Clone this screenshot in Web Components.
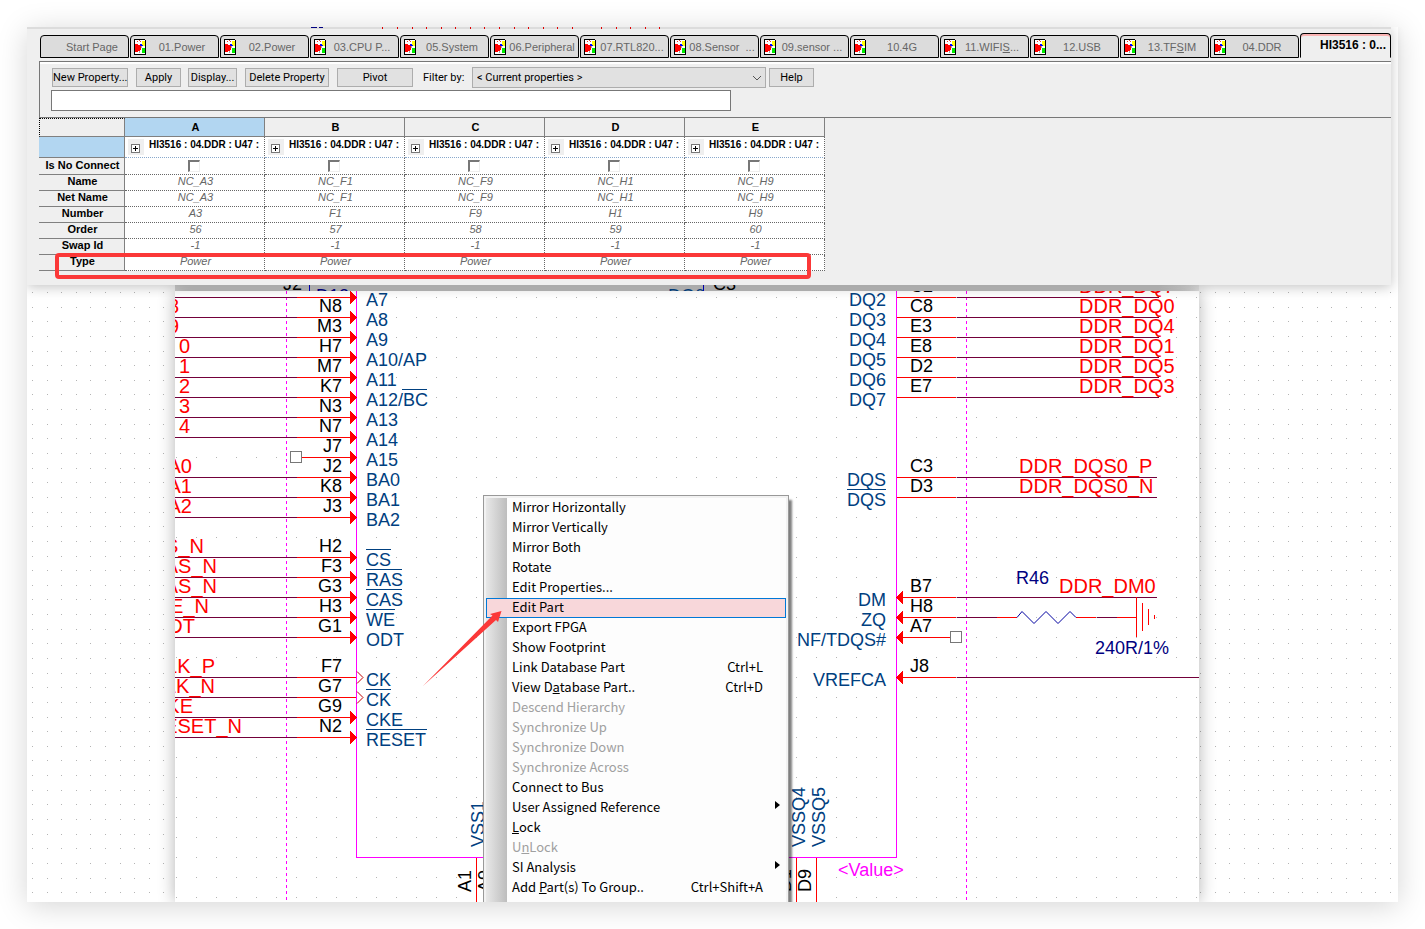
<!DOCTYPE html>
<html lang="en">
<head>
<meta charset="utf-8">
<title>HI3516 : 04.DDR</title>
<style>
  html, body { margin: 0; background: #fff; }
  body { font-family: "Liberation Sans", Arial, sans-serif; font-size: 11px; color: #000; }
</style>
</head>
<body>
<app-frame>
  <property-editor slot="editor">
    <tab-strip slot="tabs">
      <sheet-tab plain>Start Page</sheet-tab>
      <sheet-tab>01.Power</sheet-tab>
      <sheet-tab>02.Power</sheet-tab>
      <sheet-tab>03.CPU P...</sheet-tab>
      <sheet-tab>05.System</sheet-tab>
      <sheet-tab>06.Peripheral</sheet-tab>
      <sheet-tab>07.RTL820...</sheet-tab>
      <sheet-tab>08.Sensor &nbsp;...</sheet-tab>
      <sheet-tab>09.sensor ...</sheet-tab>
      <sheet-tab>10.4G</sheet-tab>
      <sheet-tab>11.WIFI<u>S</u>...</sheet-tab>
      <sheet-tab>12.USB</sheet-tab>
      <sheet-tab>13.TF<u>S</u>IM</sheet-tab>
      <sheet-tab>04.DDR</sheet-tab>
      <sheet-tab plain active>HI3516 : 0...</sheet-tab>
    </tab-strip>
    <property-toolbar slot="toolbar"></property-toolbar>
    <property-grid slot="grid"></property-grid>
  </property-editor>
  <schematic-canvas slot="canvas">
    <context-menu slot="menu">
      <menu-item>Mirror Horizontally</menu-item>
      <menu-item>Mirror Vertically</menu-item>
      <menu-item>Mirror Both</menu-item>
      <menu-item>Rotate</menu-item>
      <menu-item>Edit Properties...</menu-item>
      <menu-item selected>Edit Part</menu-item>
      <menu-item>Export FPGA</menu-item>
      <menu-item>Show Footprint</menu-item>
      <menu-item keys="Ctrl+L">Link Database Part</menu-item>
      <menu-item keys="Ctrl+D">View D<u>a</u>tabase Part..</menu-item>
      <menu-item disabled>Descend Hierarchy</menu-item>
      <menu-item disabled>Synchronize Up</menu-item>
      <menu-item disabled>Synchronize Down</menu-item>
      <menu-item disabled>Synchronize Across</menu-item>
      <menu-item>Connect to Bus</menu-item>
      <menu-item submenu>User Assigned Reference</menu-item>
      <menu-item><u>L</u>ock</menu-item>
      <menu-item disabled>U<u>n</u>Lock</menu-item>
      <menu-item submenu>SI Analysis</menu-item>
      <menu-item keys="Ctrl+Shift+A">Add <u>P</u>art(s) To Group..</menu-item>
    </context-menu>
  </schematic-canvas>
</app-frame>

<script>
const define = (name, render) => customElements.define(name, class extends HTMLElement {
  connectedCallback() {
    if (this.shadowRoot) return;
    this.attachShadow({ mode: 'open' }).innerHTML = render(this);
  }
});

define('app-frame', () => `
  <style>
    :host { display: block; padding: 27px; }
    main { background: #fff; box-shadow: 0 4px 28px rgba(0,0,0,.17); }
    ::slotted(*) { position: relative; }
    ::slotted([slot=editor]) { z-index: 1; }
  </style>
  <main><slot name="editor"></slot><slot name="canvas"></slot></main>`);

define('property-editor', () => {
  const ticks = [382,397,412,426,441,455,470,484,499,514,528,543,557,572,601,616,630,645,659];
  return `
  <style>
    :host { display: block; margin-right: 7px; background: #efefef;
            box-shadow: 0 2px 12px rgba(0,0,0,.24); padding-bottom: 14px; clip-path: inset(0 -20px -20px 0); }
    .edge { display: block; width: 100%; height: 2px; background: #dcdcdc; }
    .body { margin-left: 12px; }
    .mark { position: absolute; left: 28px; right: 580px; bottom: 6px; height: 18px;
            border: 4px solid #fb3838; border-radius: 4px; }
  </style>
  <svg class="edge" shape-rendering="crispEdges">
    <path d="M284 0h6v1h-6zM292 0h4v1h-4z" fill="#000080"/>
    ${ticks.map(x => `<rect x="${x - 27}" width="1" height="2" fill="#e00000"/>`).join('')}
  </svg>
  <slot name="tabs"></slot>
  <div class="body"><slot name="toolbar"></slot><slot name="grid"></slot></div>
  <div class="mark"></div>`;
});

define('tab-strip', () => `
  <style>
    :host { display: flex; align-items: flex-end; gap: 1px; padding: 4px 0 3px 13px; height: 25px; }
  </style><slot></slot>`);

define('sheet-tab', el => `
  <style>
    :host { display: block; flex: 0 0 89px; }
    :host([active]) { flex: 1 0 89px; }
    button { display: flex; align-items: center; width: 100%; height: 23px; padding: 0 0 0 3px; margin: 0;
      font: 11px "Liberation Sans", Arial, sans-serif; color: #666; background: #dcdcdc; white-space: nowrap;
      border: 1px solid #000; border-radius: 4px 4px 0 0; }
    :host([active]) button { height: 25px; padding-bottom: 2px; font-weight: bold; font-size: 12px; color: #000; background: #efefef;
      border-bottom-color: transparent; box-shadow: inset 0 2px #fbb4b4; }
    svg { flex: none; width: 12px; height: 16px; }
    span { flex: 1; text-align: center; }
  </style>
  <button type="button">
    <svg viewBox="0 0 12 16" shape-rendering="crispEdges">${el.hasAttribute('plain') ? '' : `
      <path d="M0 0h11v15H0z" fill="#fff"/>
      <path d="M0 0h11v1H0zM0 0h1v16H0zM11 1h1v15h-1zM0 15h12v1H0z"/>
      <path d="M1 5h3v1h2v1h1v4H6v1H4v1H1z" fill="#f00"/>
      <path d="M3 2h1v1H3zM5 1h1v1H5zM6 2h1v1H6z" fill="#e33"/>
      <path d="M8 2h3v5H8z" fill="#ff0"/><path d="M6 5h2v1h1v1H6z" fill="#00f"/>
      <path d="M8 9h3v5H8z" fill="#0e0"/><path d="M5 12h1v2H5zM7 7h1v2H7z" fill="#aaa"/>`}
    </svg><span><slot></slot></span>
  </button>`);

define('property-toolbar', () => `
  <style>
    :host { display: block; height: 55px; border: 1px solid #777; border-width: 1px 0 1px 1px;
            box-shadow: inset 0 2px #fff; font: 12px Roboto, "Liberation Sans", sans-serif; }
    .row { display: flex; align-items: center; padding: 5px 0 0 12px; height: 21px; }
    button { height: 19px; padding: 0; border: 1px solid #adadad; background: #e1e1e1; white-space: nowrap;
             font: 11px Roboto, "Liberation Sans", sans-serif; color: #000; margin-right: 8px; }
    label { font-size: 11px; width: 49px; margin-left: 2px; }
    .box { position: relative; display: flex; }
    select { appearance: none; width: 294px; height: 21px; padding: 0 4px; border: 1px solid #adadad; border-radius: 0;
             background: #e1e1e1; font: 11px Roboto, "Liberation Sans", sans-serif; color: #000; margin-right: 3px; }
    .box svg { position: absolute; right: 7px; top: 8px; width: 10px; height: 6px; pointer-events: none; }
    input { display: block; box-sizing: border-box; width: 680px; height: 21px; margin: 2px 0 0 11px;
            border: 1px solid #777; background: #fff; padding: 0 4px; }
    .w1 { width: 76px; } .w2 { width: 45px; margin-right: 7px; } .w3 { width: 49px; } .w4 { width: 84px; }
  </style>
  <div class="row">
    <button class="w1">New Property...</button><button class="w2">Apply</button>
    <button class="w3">Display...</button><button class="w4">Delete Property</button>
    <button class="w1">Pivot</button>
    <label for="filter">Filter by:</label>
    <span class="box"><select id="filter"><option>&lt; Current properties &gt;</option></select>
      <svg viewBox="0 0 10 6"><path d="M1 1l4 4 4-4" fill="none" stroke="#555"/></svg></span>
    <button class="w2">Help</button>
  </div>
  <input type="text" aria-label="Property value">`);

define('property-grid', () => {
  const pins = [['A3', 56], ['F1', 57], ['F9', 58], ['H1', 59], ['H9', 60]];
  const rows = [
    ['Is No Connect', p => `<input type="checkbox" aria-label="Is No Connect ${p[0]}">`],
    ['Name', p => 'NC_' + p[0]], ['Net Name', p => 'NC_' + p[0]], ['Number', p => p[0]],
    ['Order', p => p[1]], ['Swap Id', () => '-1'], ['Type', () => 'Power']];
  return `
  <style>
    :host { display: block; }
    table { table-layout: fixed; width: 786px; border-spacing: 0; font-size: 11px; line-height: 13px; }
    th, td { box-sizing: border-box; height: 16px; padding: 0 0 2px 2px; text-align: center; white-space: nowrap; overflow: hidden; }
    th { background: #efefef; border: 1px solid #808080; border-width: 0 1px 1px 0; }
    td { background: #fff; color: #666; font-style: italic; border: 1px dotted #666; border-width: 0 1px 1px 0; }
    thead th { height: 19px; padding: 0 0 0 2px; }
    thead th:first-child { border-top: 1px dotted #000; border-left: 1px dotted #000; }
    .on { background: #b2d6f1; }
    .part th, .part td { height: 21px; padding-left: 0; }
    .part td { color: #000; font-size: 10px; font-style: normal; font-weight: bold; border-bottom-color: #89a8cc; }
    .part div { display: flex; align-items: flex-start; gap: 5px; padding-left: 3px; height: 18px; }
    .part span { padding-top: 1px; }
    .part button { flex: none; display: flex; width: 16px; height: 16px; margin-top: 2px; padding: 5px 0 0 3px; border: 0; background: #efefef; }
    input { appearance: none; display: block; width: 12px; height: 12px; margin: 2px 0 0 61px;
            border: 1px solid #eee; border-top: 2px solid #777; border-left: 2px solid #777; box-sizing: border-box; }
    .c0 { width: 86px; } .c { width: 140px; }
  </style>
  <table>
    <colgroup><col class="c0">${pins.map(() => '<col class="c">').join('')}</colgroup>
    <thead><tr><th></th>${[...'ABCDE'].map((c, i) => `<th scope="col"${i ? '' : ' class="on"'}>${c}</th>`).join('')}</tr></thead>
    <tbody>
      <tr class="part"><th class="on"></th>${pins.map(() => `<td><div><button aria-label="Expand">
        <svg width="9" height="9" shape-rendering="crispEdges"><path d="M.5.5h8v8h-8z" fill="#fff" stroke="#777"/><path d="M2 4.5h5M4.500 2v5" stroke="#000"/></svg>
        </button><span>HI3516 : 04.DDR : U47 :</span></div></td>`).join('')}</tr>
      ${rows.map(([name, cell]) => `<tr><th scope="row">${name}</th>${pins.map(p => `<td>${cell(p)}</td>`).join('')}</tr>`).join('')}
    </tbody>
  </table>`;
});

const RED = '#ff0000', WIRE = '#73003a', NAVY = '#004080', PINK = '#ff00ff';
const line = (x1, y1, x2, y2, c, extra = '') =>
  `<path d="M${x1} ${y1}L${x2} ${y2}" stroke="${c}" fill="none" ${extra}/>`;
const text = (x, y, s, cls) => `<text x="${x}" y="${y}" class="${cls}">${s}</text>`;
const vtext = (x, y, s, cls) => `<text transform="translate(${x} ${y}) rotate(-90)" class="${cls}">${s}</text>`;

/* Left pins: row, label, pin number, net tail, net right edge, overline [x1, x2], kind */
const LEFT = [
  [297, 'A7', ''], [317, 'A8', 'N8', '8', 179], [337, 'A9', 'M3', '9', 179], [357, 'A10/AP', 'H7', '0', 190],
  [377, 'A11', 'M7', '1', 190], [397, 'A12/BC', 'K7', '2', 190, [402, 427]], [417, 'A13', 'N3', '3', 190],
  [437, 'A14', 'N7', '4', 190], [457, 'A15', 'J7', '', 0, null, 'nc'], [477, 'BA0', 'J2', 'A0', 192],
  [497, 'BA1', 'K8', 'A1', 192], [517, 'BA2', 'J3', 'A2', 192], [557, 'CS', 'H2', 'S_N', 204, [366, 391]],
  [577, 'RAS', 'F3', 'AS_N', 217, [366, 402]], [597, 'CAS', 'G3', 'AS_N', 217, [366, 402]],
  [617, 'WE', 'H3', 'E_N', 209, [366, 395]], [637, 'ODT', 'G1', 'DT', 195],
  [677, 'CK', 'F7', 'LK_P', 215, null, 'clk'], [697, 'CK', 'G7', 'LK_N', 215, [366, 391], 'clk'],
  [717, 'CKE', 'G9', 'KE', 193], [737, 'RESET', 'N2', 'ESET_N', 242, [366, 427]]];
/* Right pins: row, label, pin number, net, net x, wire end, arrow */
const RIGHT = [
  [297, 'DQ2', 'C2', 'DDR_DQ7', 1079, 1159], [317, 'DQ3', 'C8', 'DDR_DQ0', 1079, 1159], [337, 'DQ4', 'E3', 'DDR_DQ4', 1079, 1159],
  [357, 'DQ5', 'E8', 'DDR_DQ1', 1079, 1159], [377, 'DQ6', 'D2', 'DDR_DQ5', 1079, 1159], [397, 'DQ7', 'E7', 'DDR_DQ3', 1079, 1159],
  [477, 'DQS', 'C3', 'DDR_DQS0_P', 1019, 1157], [497, 'DQS', 'D3', 'DDR_DQS0_N', 1019, 1157],
  [597, 'DM', 'B7', 'DDR_DM0', 1059, 1157, 1], [617, 'ZQ', 'H8', '', 0, 997, 1],
  [637, 'NF/TDQS#', 'A7', '', 0, 0, 1], [677, 'VREFCA', 'J8', '', 0, 1199, 1]];

const dots = (x0, y0, dx, dy, cols, rows) => {
  let d = '';
  for (let r = 0; r < rows; r++) for (let c = 0; c < cols; c++)
    d += `M${x0 + Math.round(c * dx)} ${y0 + Math.round(r * dy)}h1v1h-1z`;
  return `<path d="${d}" fill="#b4b4b4"/>`;
};

define('schematic-canvas', () => {
  let lines = '', words = '', clocks = '';
  for (const [y, label, num, net, nx, bar, kind] of LEFT) {
    const m = y + .5;
    if (kind === 'nc') {
      lines += line(302, m, 350, m, RED) + `<path d="M290.500 ${y - 5.5}h11v11h-11z" fill="#fff" stroke="#777"/>`;
    } else lines += line(175, m, 297, m, WIRE) + line(297, m, 356, m, RED);
    if (kind === 'clk') clocks += `<path d="M357 ${m - 6}l6 6l-6 6" fill="none" stroke="#c00000"/>`;
    else lines += `<path d="M350 ${y - 6}l7 6.500l-7 6.500z" fill="${RED}"/>`;
    if (bar) lines += line(bar[0], y - 7.5, bar[1], y - 7.5, NAVY);
    words += text(366, y + 9, label, 'pin');
    if (num) words += text(342, y - 5, num, 'num end');
    if (net) words += text(nx, y - 4, net, 'net end');
  }
  for (const [y, label, num, net, nx, end, arrow] of RIGHT) {
    const m = y + .5;
    lines += line(897, m, end ? 956 : 950, m, RED);
    if (end) lines += line(957, m, end, m, WIRE);
    if (arrow) lines += `<path d="M903 ${y - 6}l-7 6.500l7 6.500z" fill="${RED}"/>`;
    words += text(886, y + 9, label, 'pin end') + text(910, y - 5, num, 'num');
    if (net) words += text(nx, y - 4, net, 'net');
  }
  return `
  <style>
    :host { display: block; overflow: hidden; background: #fff; }
    .grid { position: absolute; left: 0; top: 0; width: 100%; height: 100%; }
    .cols { position: relative; display: grid; grid-template-columns: 148px minmax(0, 1fr) 199px; }
    .mid { grid-column: 2; }
    .band { display: block; width: 100%; height: 6px; background: linear-gradient(90deg, #d8d8d8 96%, #f2f2f2); }
    .sheet { background: #fff; overflow: hidden; box-shadow: 0 0 16px rgba(0,0,0,.3); }
    .sheet svg { display: block; }
    text { font-family: "Liberation Sans", Arial, sans-serif; font-size: 18px; }
    .pin { fill: ${NAVY}; } .num { fill: #000; } .net { fill: ${RED}; font-size: 20px; }
    .ref { fill: #000080; } .val { fill: ${PINK}; } .end { text-anchor: end; }
    ::slotted(context-menu) { position: absolute; left: 456px; top: 210px; }
    .arrow { position: absolute; left: 396px; top: 325px; }
  </style>
  <svg class="grid" shape-rendering="crispEdges">${dots(5, 7, 14.6, 14.64, 94, 42)}</svg>
  <div class="cols"><div class="mid">
    <svg class="band" viewBox="175 285 1024 6" preserveAspectRatio="xMinYMin slice">
      ${text(283, 290, 'J2', 'num')}${line(309.5, 285, 309.5, 291, '#0000c0')}${text(316, 302, 'D13', 'ref')}
      ${text(668, 302, 'DQ0', 'pin')}${line(703.5, 285, 703.5, 291, '#0000c0')}${text(713, 290, 'C3', 'num')}
    </svg>
    <div class="sheet">
    <svg viewBox="175 291 1024 611" width="1024" height="611">
      <g shape-rendering="crispEdges">
        ${dots(176, 297, 20, 20, 52, 31)}
        ${line(286.5, 291, 286.5, 902, PINK, 'stroke-dasharray="3 3"')}
        ${line(966.5, 291, 966.5, 902, PINK, 'stroke-dasharray="3 3"')}
        <path d="M356.500 291V857.500H896.500V291" fill="none" stroke="${PINK}"/>
        ${lines}
        ${line(847, 489.5, 886, 489.5, NAVY)}
        ${line(997, 617.5, 1017, 617.5, RED)}${line(1076, 617.5, 1096, 617.5, RED)}
        ${line(1097, 617.5, 1117, 617.5, WIRE)}${line(1117, 617.5, 1136, 617.5, RED)}
        ${line(1136.5, 597, 1136.5, 637, RED)}${line(1142.5, 603, 1142.5, 631, RED)}
        ${line(1148.5, 609, 1148.5, 625, RED)}${line(1154.5, 615, 1154.5, 619, RED)}
        <path d="M950.500 631.500h11v11h-11z" fill="#fff" stroke="#777"/>
        ${[476, 796, 816].map(x => line(x + .5, 858, x + .5, 902, RED)).join('')}
      </g>
      ${clocks}
      <path d="M1017 617.500l5-6l12 12l12-12l12 12l12-12l6 6" fill="none" stroke="#0000a0"/>
      ${words}
      ${text(1016, 584, 'R46', 'ref')}${text(1095, 654, '240R/1%', 'ref')}${text(838, 876, '&lt;Value&gt;', 'val')}
      ${vtext(484, 847, 'VSS1', 'pin')}${vtext(805, 847, 'VSSQ4', 'pin')}${vtext(825, 847, 'VSSQ5', 'pin')}
      ${vtext(471, 892, 'A1', 'num')}${vtext(491, 892, 'A9', 'num')}${vtext(791, 892, 'D1', 'num')}${vtext(811, 892, 'D9', 'num')}
    </svg></div>
  </div></div>
  <slot name="menu"></slot>
  <svg class="arrow" width="80" height="78" viewBox="423 610 80 78">
    <path d="M423 686L492.500 615.500L490 614L501.500 611L498 622L496 620Z" fill="#fb3838"/>
  </svg>`;
});

define('context-menu', () => `
  <style>
    :host { display: block; box-sizing: border-box; width: 306px; padding: 2px 2px 0; border: 1px solid #999;
            background: #fdfdfd; box-shadow: inset 0 0 0 2px #f2f2f2, 3px 5px 2px rgba(0,0,0,.5); }
    nav { padding-bottom: 20px; background: linear-gradient(90deg, #e8e8e8, #bdbdbd) 0 0 / 21px 100% no-repeat; }
  </style><nav><slot></slot></nav>`);

define('menu-item', el => `
  <style>
    :host { display: block; color: #000; }
    :host([disabled]) { color: #a0a0a0; }
    button { display: flex; align-items: center; box-sizing: border-box; width: 100%; height: 20px; padding: 0 22px 2px 25px; margin: 0;
             border: 1px solid transparent; background: none; color: inherit; font: 13px/16px "Noto Sans CJK SC", "Noto Sans", sans-serif; text-align: left; white-space: pre; }
    :host([selected]) button { background: #f8d7da; border-color: #0078d7; }
    .label { flex: 1; }
    svg { margin: 0 -17px 4px 0; }
  </style>
  <button type="button" ${el.hasAttribute('disabled') ? 'disabled' : ''}><span class="label"><slot></slot></span>${
    el.hasAttribute('keys') ? `<span>${el.getAttribute('keys')}</span>` : ''}${
    el.hasAttribute('submenu') ? '<svg width="5" height="8"><path d="M0 0l5 4l-5 4z"/></svg>' : ''}</button>`);
</script>
</body>
</html>
